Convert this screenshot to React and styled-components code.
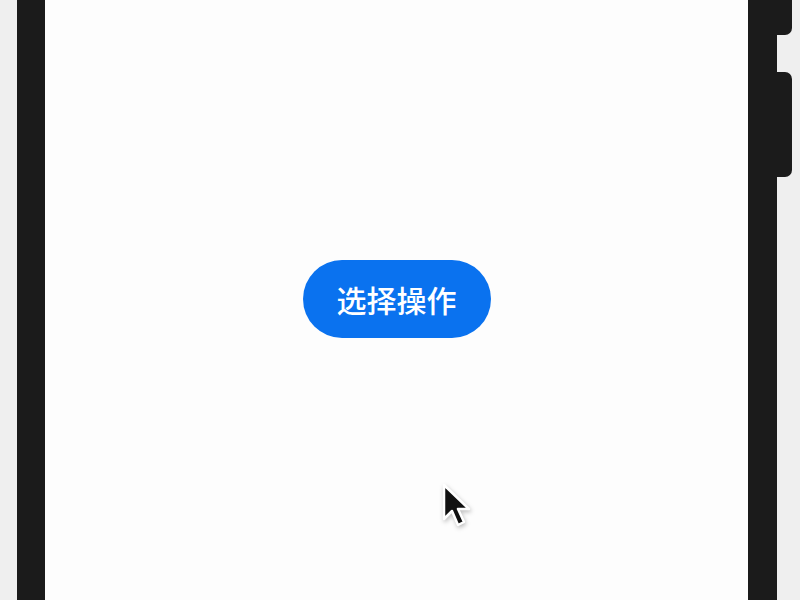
import React from "react";
import styled, { createGlobalStyle } from "styled-components";

const GlobalStyle = createGlobalStyle`
  html, body {
    margin: 0;
    padding: 0;
    background: #efefef;
    font-family: "Noto Sans CJK SC", "Noto Sans", sans-serif;
  }
`;

const Page = styled.div`
  width: 800px;
  height: 600px;
  overflow: hidden;
  display: flex;
  background: #efefef;
`;

const Phone = styled.div`
  position: relative;
  margin-left: 17px;
  width: 760px;
  height: 600px;
  background: #1b1b1b;
  padding: 0 29px 0 28px;
  box-sizing: border-box;
  display: flex;
`;

const Screen = styled.div`
  position: relative;
  flex: 1;
  background: #fdfdfd;
  display: flex;
  align-items: center;
  justify-content: center;
  padding-bottom: 2px;
`;

const SideKey = styled.div`
  position: absolute;
  right: -15px;
  top: ${(p) => p.$top}px;
  width: 16px;
  height: ${(p) => p.$h}px;
  background: #1b1b1b;
  border-radius: 0 7px 7px 0;
`;

const ActionButton = styled.button`
  border: none;
  outline: none;
  background: #0a72ef;
  color: #ffffff;
  font-family: "Noto Sans CJK SC", "Noto Sans", sans-serif;
  font-size: 30px;
  font-weight: 500;
  width: 188px;
  height: 78px;
  padding: 0;
  border-radius: 39px;
  cursor: pointer;
`;

const Cursor = styled.svg`
  position: absolute;
  left: 397px;
  top: 483px;
  filter: drop-shadow(1px 2px 2px rgba(0, 0, 0, 0.25));
`;

export default function App() {
  return (
    <Page>
      <GlobalStyle />
      <Phone>
        <SideKey $top={-20} $h={55} />
        <SideKey $top={72} $h={105} />
        <Screen>
          <ActionButton>选择操作</ActionButton>
          <Cursor width="30" height="46" viewBox="0 0 30 46">
            <path
              d="M2 2 L2 36 L10 28 L16 42 L22 39 L16 26 L27 26 Z"
              fill="#111"
              stroke="#fff"
              strokeWidth="2.5"
              strokeLinejoin="round"
            />
          </Cursor>
        </Screen>
      </Phone>
    </Page>
  );
}
